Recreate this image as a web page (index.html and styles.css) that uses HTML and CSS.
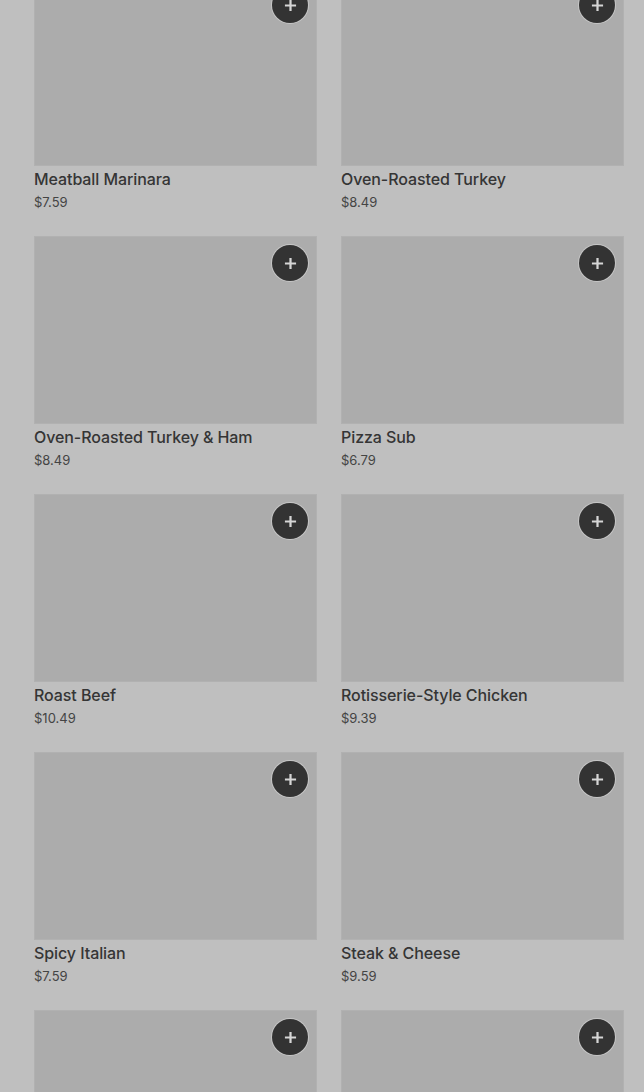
FILE: index.html
```html
<!DOCTYPE html>
<html>
<head>
<meta charset="utf-8">
<link rel="stylesheet" href="styles.css">
</head>
<body>
<main class="grid">
  <div class="card"><div class="img"><button class="add"><svg viewBox="0 0 14 14"><path d="M7 1v12M1 7h12"/></svg></button></div><div class="name">Meatball Marinara</div><div class="price">$7.59</div></div>
  <div class="card"><div class="img"><button class="add"><svg viewBox="0 0 14 14"><path d="M7 1v12M1 7h12"/></svg></button></div><div class="name">Oven-Roasted Turkey</div><div class="price">$8.49</div></div>
  <div class="card"><div class="img"><button class="add"><svg viewBox="0 0 14 14"><path d="M7 1v12M1 7h12"/></svg></button></div><div class="name">Oven-Roasted Turkey &amp; Ham</div><div class="price">$8.49</div></div>
  <div class="card"><div class="img"><button class="add"><svg viewBox="0 0 14 14"><path d="M7 1v12M1 7h12"/></svg></button></div><div class="name">Pizza Sub</div><div class="price">$6.79</div></div>
  <div class="card"><div class="img"><button class="add"><svg viewBox="0 0 14 14"><path d="M7 1v12M1 7h12"/></svg></button></div><div class="name">Roast Beef</div><div class="price">$10.49</div></div>
  <div class="card"><div class="img"><button class="add"><svg viewBox="0 0 14 14"><path d="M7 1v12M1 7h12"/></svg></button></div><div class="name">Rotisserie-Style Chicken</div><div class="price">$9.39</div></div>
  <div class="card"><div class="img"><button class="add"><svg viewBox="0 0 14 14"><path d="M7 1v12M1 7h12"/></svg></button></div><div class="name">Spicy Italian</div><div class="price">$7.59</div></div>
  <div class="card"><div class="img"><button class="add"><svg viewBox="0 0 14 14"><path d="M7 1v12M1 7h12"/></svg></button></div><div class="name">Steak &amp; Cheese</div><div class="price">$9.59</div></div>
  <div class="card"><div class="img"><button class="add"><svg viewBox="0 0 14 14"><path d="M7 1v12M1 7h12"/></svg></button></div></div>
  <div class="card"><div class="img"><button class="add"><svg viewBox="0 0 14 14"><path d="M7 1v12M1 7h12"/></svg></button></div></div>
</main>
</body>
</html>
```
FILE: styles.css
```css
html, body {
  margin: 0;
  padding: 0;
  background: #bfbfbf;
  overflow: hidden;
}
body {
  font-family: Inter, "Noto Sans", "Liberation Sans", sans-serif;
  color: #333333;
}
.grid {
  display: grid;
  grid-template-columns: 283px 283px;
  column-gap: 24px;
  row-gap: 24px;
  padding: 0 20px 0 34px;
  margin-top: -22px;
}
.card {
  display: flex;
  flex-direction: column;
  min-height: 234px;
}
.img {
  position: relative;
  height: 188px;
  background: #acacac;
  box-shadow: inset 0 0 0 1px #b1b1b1;
}
.add {
  position: absolute;
  top: 9px;
  right: 9px;
  width: 36px;
  height: 36px;
  border-radius: 50%;
  border: none;
  padding: 0;
  background: #333333;
  box-shadow: 0 0 0 1px #c6c6c6;
  display: flex;
  align-items: center;
  justify-content: center;
}
.add svg {
  width: 13px;
  height: 13px;
  fill: none;
  stroke: #d6d6d6;
  stroke-width: 2.4;
}
.name {
  margin-top: 3px;
  font-size: 16px;
  font-weight: 500;
  line-height: 20px;
  letter-spacing: -0.08px;
  color: #353535;
}
.price {
  margin-top: 3px;
  font-size: 13px;
  line-height: 20px;
  color: #444444;
}
```
